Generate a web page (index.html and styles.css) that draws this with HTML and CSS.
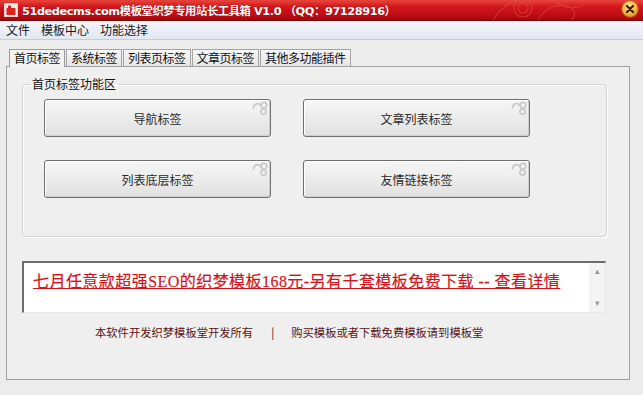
FILE: index.html
```html
<!DOCTYPE html>
<html lang="zh-CN">
<head>
<meta charset="utf-8">
<title>51dedecms.com模板堂织梦专用站长工具箱</title>
<link rel="stylesheet" href="styles.css">
</head>
<body>
<div class="window">
  <div class="titlebar">
    <svg class="app-icon" width="14" height="14" viewBox="0 0 14 14">
      <rect x="0.5" y="0.5" width="13" height="13" fill="#fbe9e6" stroke="#f6d0c8"/>
      <rect x="2.5" y="5" width="9" height="7" fill="#d8231e"/>
      <rect x="4" y="2.5" width="3" height="3" fill="#d8231e"/>
    </svg>
    <span class="title-text">51dedecms.com模板堂织梦专用站长工具箱 V1.0 （QQ：97128916）</span>
    <svg class="deco" width="120" height="21" viewBox="0 0 120 21">
      <g fill="none" stroke="#e0574f" stroke-width="1.2" opacity="0.5">
        <circle cx="40" cy="8" r="9"/>
        <circle cx="40" cy="8" r="5"/>
        <path d="M10 20 C20 4 30 2 38 -2"/>
        <path d="M55 20 C62 8 72 4 84 6 C92 8 94 16 88 20"/>
        <path d="M70 -2 C76 6 86 10 100 6"/>
      </g>
    </svg>
    <span class="close-btn">
      <svg width="18" height="18" viewBox="0 0 18 18">
        <defs>
          <radialGradient id="cg" cx="0.45" cy="0.35" r="0.7">
            <stop offset="0" stop-color="#ffe79a"/>
            <stop offset="0.6" stop-color="#f6b440"/>
            <stop offset="1" stop-color="#d98514"/>
          </radialGradient>
        </defs>
        <circle cx="9" cy="9" r="8.3" fill="url(#cg)" stroke="#b8650c" stroke-width="0.8"/>
        <path d="M6 6 L12 12 M12 6 L6 12" stroke="#3a2008" stroke-width="2.2" stroke-linecap="round"/>
      </svg>
    </span>
  </div>
  <div class="menubar">
    <span class="menu-item">文件</span>
    <span class="menu-item">模板中心</span>
    <span class="menu-item">功能选择</span>
  </div>
  <div class="content">
    <div class="tabs">
      <span class="tab active">首页标签</span>
      <span class="tab">系统标签</span>
      <span class="tab">列表页标签</span>
      <span class="tab">文章页标签</span>
      <span class="tab">其他多功能插件</span>
    </div>
    <div class="panel">
      <fieldset class="group">
        <legend>首页标签功能区</legend>
        <div class="btn-grid">
          <button class="btn">导航标签<svg class="swirl" width="17" height="15" viewBox="0 0 17 15"><g fill="none" stroke="#c9c9c9" stroke-width="1.7" stroke-linecap="round"><path d="M1.5 7 C1.5 2.5 7 1.5 8.5 4.5"/><circle cx="12" cy="4.2" r="2.8"/><circle cx="11.5" cy="10.6" r="2.7"/></g></svg></button>
          <button class="btn">文章列表标签<svg class="swirl" width="17" height="15" viewBox="0 0 17 15"><g fill="none" stroke="#c9c9c9" stroke-width="1.7" stroke-linecap="round"><path d="M1.5 7 C1.5 2.5 7 1.5 8.5 4.5"/><circle cx="12" cy="4.2" r="2.8"/><circle cx="11.5" cy="10.6" r="2.7"/></g></svg></button>
          <button class="btn">列表底层标签<svg class="swirl" width="17" height="15" viewBox="0 0 17 15"><g fill="none" stroke="#c9c9c9" stroke-width="1.7" stroke-linecap="round"><path d="M1.5 7 C1.5 2.5 7 1.5 8.5 4.5"/><circle cx="12" cy="4.2" r="2.8"/><circle cx="11.5" cy="10.6" r="2.7"/></g></svg></button>
          <button class="btn">友情链接标签<svg class="swirl" width="17" height="15" viewBox="0 0 17 15"><g fill="none" stroke="#c9c9c9" stroke-width="1.7" stroke-linecap="round"><path d="M1.5 7 C1.5 2.5 7 1.5 8.5 4.5"/><circle cx="12" cy="4.2" r="2.8"/><circle cx="11.5" cy="10.6" r="2.7"/></g></svg></button>
        </div>
      </fieldset>
      <div class="ad">
        <a class="ad-link" href="#">七月任意款超强SEO的织梦模板168元-另有千套模板免费下载 -- 查看详情</a>
        <div class="scrollbar">
          <span class="arrow">&#9652;</span>
          <span class="arrow">&#9662;</span>
        </div>
      </div>
      <div class="footer">
        <span>本软件开发织梦模板堂开发所有</span>
        <span class="sep">|</span>
        <span>购买模板或者下载免费模板请到模板堂</span>
      </div>
    </div>
  </div>
</div>
</body>
</html>
```
FILE: styles.css
```css
* { box-sizing: border-box; }
html, body { margin: 0; padding: 0; }
body {
  width: 643px;
  height: 395px;
  overflow: hidden;
  background: #ececec;
  font-family: "Noto Sans CJK SC", "Liberation Sans", sans-serif;
  font-size: 12px;
  color: #000;
}
.window { width: 643px; height: 395px; display: flex; flex-direction: column; }

.titlebar {
  height: 21px;
  flex: none;
  display: flex;
  align-items: center;
  position: relative;
  background: linear-gradient(to bottom, #e8453c 0%, #d0161b 35%, #bf0c12 75%, #9c0a0d 100%);
  border-bottom: 1px solid #7d0808;
}
.app-icon { margin-left: 4px; flex: none; }
.title-text {
  margin-left: 4px;
  color: #fff;
  font-family: "DejaVu Sans", "Noto Sans CJK SC", sans-serif;
  font-weight: bold;
  font-size: 11.3px;
  letter-spacing: -0.4px;
  white-space: nowrap;
  text-shadow: 0 0 1px rgba(80,0,0,0.6);
}
.deco { position: absolute; right: 40px; top: 0; }
.close-btn { position: absolute; right: 4px; top: 0; line-height: 0; }

.menubar {
  height: 19px;
  flex: none;
  display: flex;
  align-items: center;
  gap: 11px;
  padding-left: 6px;
  background: linear-gradient(to bottom, #f4f6fb 0%, #e3e7f1 100%);
  border-bottom: 1px solid #c9cdd7;
}
.menu-item { line-height: 16px; color: #1a1a1a; }

.content { flex: 1; padding: 9px 0 0 6px; display: flex; flex-direction: column; }

.tabs { display: flex; padding-left: 3px; height: 17px; align-items: flex-end; }
.tab {
  height: 17px;
  line-height: 15px;
  padding: 0 4px;
  margin-right: 1px;
  letter-spacing: -0.5px;
  border: 1px solid #a3a3a3;
  border-bottom: none;
  background: linear-gradient(to bottom, #f7f7f7, #e6e6e6);
  color: #111;
  white-space: nowrap;
}
.tab.active {
  height: 18px;
  background: #f2f2f2;
  border-color: #9a9a9a;
  position: relative;
  top: 1px;
  z-index: 1;
}

.panel {
  width: 624px;
  height: 314px;
  border: 1px solid #a0a0a0;
  background: #efefef;
  padding: 10px 0 0 15px;
  display: flex;
  flex-direction: column;
}

.group {
  margin: 0;
  width: 585px;
  height: 160px;
  border: 1px solid #d2d2d2;
  border-radius: 4px;
  padding: 8px 0 0 21px;
  box-shadow: 1px 1px 0 #fff inset, 1px 1px 0 #fff;
}
.group legend {
  padding: 0 1px;
  margin-left: -13px;
  font-size: 12px;
  line-height: 14px;
  color: #111;
}
.btn-grid {
  display: grid;
  grid-template-columns: 227px 227px;
  grid-auto-rows: 38px;
  column-gap: 32px;
  row-gap: 23px;
}
.btn {
  position: relative;
  font-family: "Noto Sans CJK SC", sans-serif;
  font-size: 12px;
  color: #2a2a2a;
  border: 1px solid #707070;
  border-radius: 3px;
  background: linear-gradient(to bottom, #f6f6f6 0%, #ececec 50%, #e0e0e0 100%);
  box-shadow: inset 1px 1px 0 #fff, inset -1px -1px 0 #cfcfcf;
  padding: 0;
}
.swirl { position: absolute; right: 1px; top: 1px; }

.ad {
  margin-top: 24px;
  width: 584px;
  height: 52px;
  background: #fff;
  border-top: 2px solid #6d6d6d;
  border-left: 2px solid #6d6d6d;
  border-right: 1px solid #e6e6e6;
  border-bottom: 1px solid #e6e6e6;
  display: flex;
  align-items: stretch;
}
.ad-link {
  flex: 1;
  padding: 8px 0 0 9px;
  font-family: "Liberation Serif", "Noto Sans CJK SC", serif;
  font-size: 16px;
  line-height: 22px;
  letter-spacing: 0.45px;
  color: #d4141c;
  text-decoration: underline;
  white-space: nowrap;
  -webkit-text-stroke: 0.2px #d4141c;
}
.scrollbar {
  width: 16px;
  flex: none;
  background: #f4f4f4;
  display: flex;
  flex-direction: column;
  justify-content: space-between;
  align-items: center;
  padding: 3px 0 4px;
}
.arrow { font-size: 9px; line-height: 10px; color: #9a9a9a; }

.footer {
  margin-top: 11px;
  padding-left: 73px;
  display: flex;
  color: #5a1414;
  font-size: 11.3px;
  line-height: 16px;
}
.footer .sep { margin: 0 17px 0 18px; color: #3a1010; }
```
